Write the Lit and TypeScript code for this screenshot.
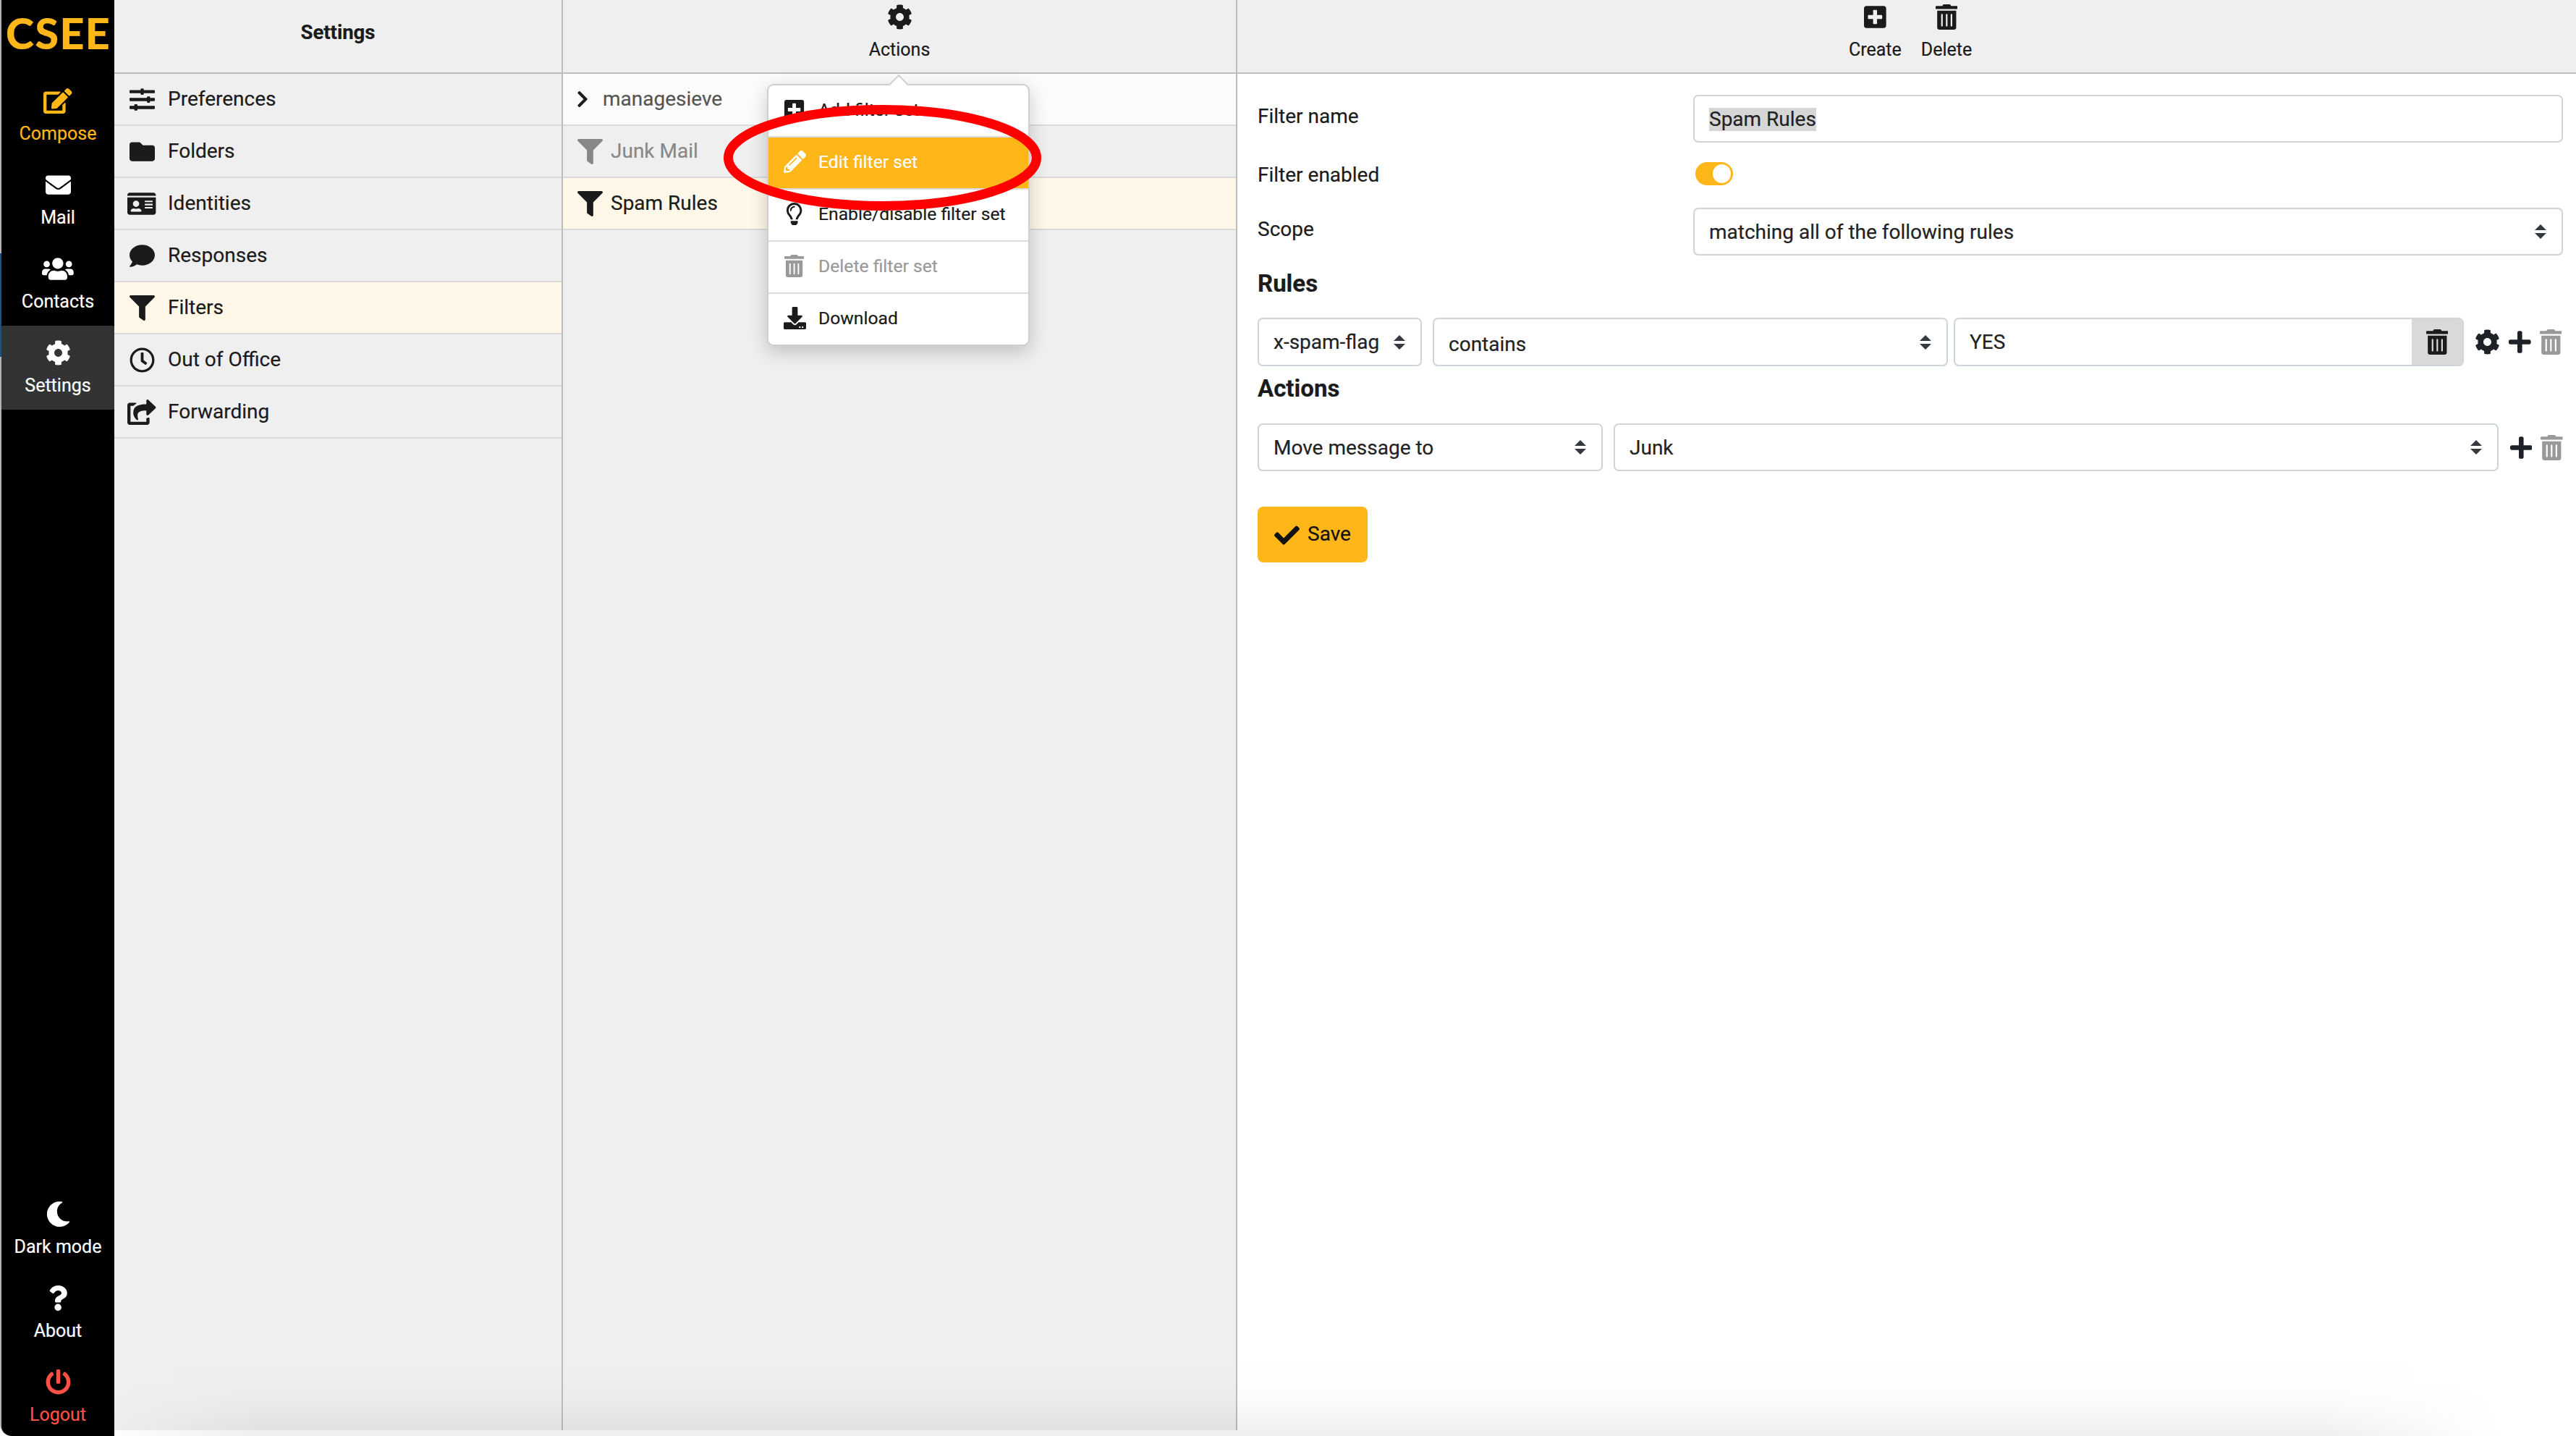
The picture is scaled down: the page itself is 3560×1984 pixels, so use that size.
import { LitElement, html, css } from "lit";
import { customElement } from "lit/decorators.js";

type Icon = [number, string];
const I: Record<string, Icon> = {
  cog: [512, "M487.4 315.7l-42.6-24.6c4.3-23.2 4.3-47 0-70.2l42.6-24.6c4.9-2.8 7.1-8.6 5.5-14-11.1-35.6-30-67.8-54.7-94.6-3.8-4.1-10-5.1-14.8-2.3L380.8 110c-17.9-15.4-38.5-27.3-60.8-35.1V25.8c0-5.6-3.9-10.5-9.4-11.7-36.7-8.2-74.3-7.8-109.2 0-5.5 1.2-9.4 6.1-9.4 11.7V75c-22.2 7.9-42.8 19.8-60.8 35.1L88.7 85.5c-4.9-2.8-11-1.9-14.8 2.3-24.7 26.7-43.6 58.9-54.7 94.6-1.7 5.4.6 11.2 5.5 14L67.3 221c-4.3 23.2-4.3 47 0 70.2l-42.6 24.6c-4.9 2.8-7.1 8.6-5.5 14 11.1 35.6 30 67.8 54.7 94.6 3.8 4.1 10 5.1 14.8 2.3l42.6-24.6c17.9 15.4 38.5 27.3 60.8 35.1v49.2c0 5.6 3.9 10.5 9.4 11.7 36.7 8.2 74.3 7.8 109.2 0 5.5-1.2 9.4-6.1 9.4-11.7v-49.2c22.2-7.9 42.8-19.8 60.8-35.1l42.6 24.6c4.9 2.8 11 1.9 14.8-2.3 24.7-26.7 43.6-58.9 54.7-94.6 1.5-5.5-.7-11.3-5.6-14.1zM256 336c-44.1 0-80-35.9-80-80s35.9-80 80-80 80 35.9 80 80-35.9 80-80 80z"],
  trash: [448, "M32 464a48 48 0 0 0 48 48h288a48 48 0 0 0 48-48V128H32zm272-256a16 16 0 0 1 32 0v224a16 16 0 0 1-32 0zm-96 0a16 16 0 0 1 32 0v224a16 16 0 0 1-32 0zm-96 0a16 16 0 0 1 32 0v224a16 16 0 0 1-32 0zM432 32H312l-9.4-18.7A24 24 0 0 0 281.1 0H166.8a23.72 23.72 0 0 0-21.4 13.3L136 32H16A16 16 0 0 0 0 48v32a16 16 0 0 0 16 16h416a16 16 0 0 0 16-16V48a16 16 0 0 0-16-16z"],
  plusSquare: [448, "M400 32H48C21.5 32 0 53.5 0 80v352c0 26.5 21.5 48 48 48h352c26.5 0 48-21.5 48-48V80c0-26.5-21.5-48-48-48zm-32 252c0 6.6-5.4 12-12 12h-92v92c0 6.6-5.4 12-12 12h-56c-6.6 0-12-5.4-12-12v-92H92c-6.6 0-12-5.4-12-12v-56c0-6.6 5.4-12 12-12h92v-92c0-6.6 5.4-12 12-12h56c6.6 0 12 5.4 12 12v92h92c6.6 0 12 5.4 12 12v56z"],
  plus: [448, "M416 208H272V64c0-17.67-14.33-32-32-32h-32c-17.67 0-32 14.33-32 32v144H32c-17.67 0-32 14.33-32 32v32c0 17.67 14.33 32 32 32h144v144c0 17.67 14.33 32 32 32h32c17.67 0 32-14.33 32-32V304h144c17.67 0 32-14.33 32-32v-32c0-17.67-14.33-32-32-32z"],
  filter: [512, "M487.976 0H24.028C2.71 0-8.047 25.866 7.058 40.971L192 225.941V432c0 7.831 3.821 15.17 10.237 19.662l80 55.98C298.02 518.69 320 507.493 320 487.98V225.941l184.947-184.97C520.021 25.896 509.338 0 487.976 0z"],
  chevron: [320, "M285.476 272.971L91.132 467.314c-9.373 9.373-24.569 9.373-33.941 0l-22.667-22.667c-9.357-9.357-9.375-24.522-.04-33.901L188.505 256 34.484 101.255c-9.335-9.379-9.317-24.544.04-33.901l22.667-22.667c9.373-9.373 24.569-9.373 33.941 0L285.475 239.03c9.373 9.372 9.373 24.568.001 33.941z"],
  pencil: [512, "M497.9 142.1l-46.1 46.1c-4.7 4.7-12.3 4.7-17 0l-111-111c-4.7-4.7-4.7-12.3 0-17l46.1-46.1c18.7-18.7 49.1-18.7 67.9 0l60.1 60.1c18.8 18.7 18.8 49.1 0 67.9zM284.2 99.8L21.6 362.4.4 483.9c-2.9 16.4 11.4 30.6 27.8 27.8l121.5-21.3 262.6-262.6c4.7-4.7 4.7-12.3 0-17l-111-111c-4.8-4.7-12.4-4.7-17.1 0zM124.1 339.9c-5.5-5.5-5.5-14.3 0-19.8l154-154c5.5-5.5 14.3-5.5 19.8 0s5.5 14.3 0 19.8l-154 154c-5.5 5.5-14.3 5.5-19.8 0zM88 424h48v36.3l-64.5 11.3-31.1-31.1L51.7 376H88v48z"],
  bulb: [352, "M176 80c-52.94 0-96 43.06-96 96 0 8.84 7.16 16 16 16s16-7.16 16-16c0-35.3 28.72-64 64-64 8.84 0 16-7.16 16-16s-7.16-16-16-16zM96.06 459.17c0 3.15.93 6.22 2.68 8.84l24.51 36.84c2.97 4.46 7.97 7.14 13.32 7.14h78.85c5.36 0 10.36-2.68 13.32-7.14l24.51-36.84c1.74-2.62 2.67-5.7 2.68-8.84l.05-43.18H96.02l.04 43.18zM176 0C73.72 0 0 82.97 0 176c0 44.37 16.45 84.85 43.56 115.78 16.64 18.99 42.74 58.8 52.42 92.16v.06h48v-.12c-.01-4.77-.72-9.51-2.15-14.07-5.59-17.81-22.82-64.77-62.17-109.67-20.54-23.43-31.52-53.15-31.61-84.14-.2-73.64 59.67-128 127.95-128 70.58 0 128 57.42 128 128 0 30.97-11.24 60.85-31.65 84.14-39.11 44.61-56.42 91.47-62.1 109.46a47.507 47.507 0 0 0-2.22 14.3v.1h48v-.05c9.68-33.37 35.78-73.18 52.42-92.16C335.55 260.85 352 220.37 352 176 352 78.8 273.2 0 176 0z"],
  download: [512, "M216 0h80c13.3 0 24 10.7 24 24v168h87.7c17.8 0 26.7 21.5 14.1 34.1L269.7 378.3c-7.5 7.5-19.8 7.5-27.3 0L90.1 226.1c-12.6-12.6-3.7-34.1 14.1-34.1H192V24c0-13.3 10.7-24 24-24zm296 376v112c0 13.3-10.7 24-24 24H24c-13.3 0-24-10.7-24-24V376c0-13.3 10.7-24 24-24h146.7l49 49c20.1 20.1 52.5 20.1 72.6 0l49-49H488c13.3 0 24 10.7 24 24zm-124 88c0-11-9-20-20-20s-20 9-20 20 9 20 20 20 20-9 20-20zm64 0c0-11-9-20-20-20s-20 9-20 20 9 20 20 20 20-9 20-20z"],
  check: [512, "M173.898 439.404l-166.4-166.4c-9.997-9.997-9.997-26.206 0-36.204l36.203-36.204c9.997-9.998 26.207-9.998 36.204 0L192 312.69 432.095 72.596c9.997-9.997 26.207-9.997 36.204 0l36.203 36.204c9.997 9.997 9.997 26.206 0 36.204l-294.4 294.401c-9.998 9.997-26.207 9.997-36.204-.001z"],
  edit: [576, "M402.6 83.2l90.2 90.2c3.8 3.8 3.8 10 0 13.8L274.4 405.6l-92.8 10.3c-12.4 1.4-22.9-9.1-21.5-21.5l10.3-92.8L388.8 83.2c3.8-3.8 10-3.8 13.8 0zm162-22.9l-48.8-48.8c-15.2-15.2-39.9-15.2-55.2 0l-35.4 35.4c-3.8 3.8-3.8 10 0 13.8l90.2 90.2c3.8 3.8 10 3.8 13.8 0l35.4-35.4c15.2-15.3 15.2-40 0-55.2zM384 346.2V448H64V128h229.8c3.2 0 6.2-1.3 8.5-3.5l40-40c7.6-7.6 2.2-20.5-8.5-20.5H48C21.5 64 0 85.5 0 112v352c0 26.5 21.5 48 48 48h352c26.5 0 48-21.5 48-48V306.2c0-10.7-12.9-16-20.5-8.5l-40 40c-2.2 2.3-3.5 5.3-3.5 8.5z"],
  envelope: [512, "M502.3 190.8c3.9-3.1 9.7-.2 9.7 4.7V400c0 26.5-21.5 48-48 48H48c-26.5 0-48-21.5-48-48V195.6c0-5 5.7-7.8 9.7-4.7 22.4 17.4 52.1 39.5 154.1 113.6 21.1 15.4 56.7 47.8 92.2 47.6 35.7.3 72-32.8 92.3-47.6 102-74.1 131.6-96.3 154-113.7zM256 320c23.2.4 56.6-29.2 73.4-41.4 132.7-96.3 142.8-104.7 173.4-128.7 5.8-4.5 9.2-11.5 9.2-18.9v-19c0-26.5-21.5-48-48-48H48C21.5 64 0 85.5 0 112v19c0 7.4 3.4 14.3 9.2 18.9 30.6 23.9 40.7 32.4 173.4 128.7 16.8 12.2 50.2 41.8 73.4 41.4z"],
  users: [640, "M96 224c35.3 0 64-28.7 64-64s-28.7-64-64-64-64 28.7-64 64 28.7 64 64 64zm448 0c35.3 0 64-28.7 64-64s-28.7-64-64-64-64 28.7-64 64 28.7 64 64 64zm32 32h-64c-17.6 0-33.5 7.1-45.1 18.6 40.3 22.1 68.9 62 75.1 109.4h66c17.7 0 32-14.3 32-32v-32c0-35.3-28.7-64-64-64zm-256 0c61.9 0 112-50.1 112-112S381.9 32 320 32 208 82.1 208 144s50.1 112 112 112zm76.8 32h-8.3c-20.8 10-43.9 16-68.5 16s-47.6-6-68.5-16h-8.3C179.6 288 128 339.6 128 403.2V432c0 26.5 21.5 48 48 48h288c26.5 0 48-21.5 48-48v-28.8c0-63.6-51.6-115.2-115.2-115.2zm-223.7-13.4C161.5 263.1 145.6 256 128 256H64c-35.3 0-64 28.7-64 64v32c0 17.7 14.3 32 32 32h65.9c6.3-47.4 34.9-87.3 75.2-109.4z"],
  sliders: [512, "M496 384H160v-16c0-8.8-7.2-16-16-16h-32c-8.8 0-16 7.2-16 16v16H16c-8.8 0-16 7.2-16 16v32c0 8.8 7.2 16 16 16h80v16c0 8.8 7.2 16 16 16h32c8.8 0 16-7.2 16-16v-16h336c8.8 0 16-7.2 16-16v-32c0-8.8-7.2-16-16-16zm0-160h-80v-16c0-8.8-7.2-16-16-16h-32c-8.8 0-16 7.2-16 16v16H16c-8.8 0-16 7.2-16 16v32c0 8.8 7.2 16 16 16h336v16c0 8.8 7.2 16 16 16h32c8.8 0 16-7.2 16-16v-16h80c8.8 0 16-7.2 16-16v-32c0-8.8-7.2-16-16-16zm0-160H288V48c0-8.8-7.2-16-16-16h-32c-8.8 0-16 7.2-16 16v16H16C7.2 64 0 71.2 0 80v32c0 8.8 7.2 16 16 16h208v16c0 8.8 7.2 16 16 16h32c8.8 0 16-7.2 16-16v-16h208c8.8 0 16-7.2 16-16V80c0-8.8-7.2-16-16-16z"],
  folder: [512, "M464 128H272l-64-64H48C21.49 64 0 85.49 0 112v288c0 26.51 21.49 48 48 48h416c26.51 0 48-21.49 48-48V176c0-26.51-21.49-48-48-48z"],
  idCard: [576, "M528 32H48C21.5 32 0 53.5 0 80v16h576V80c0-26.5-21.5-48-48-48zM0 432c0 26.5 21.5 48 48 48h480c26.5 0 48-21.5 48-48V128H0v304zm352-232c0-4.4 3.6-8 8-8h144c4.4 0 8 3.6 8 8v16c0 4.4-3.6 8-8 8H360c-4.4 0-8-3.6-8-8v-16zm0 64c0-4.4 3.6-8 8-8h144c4.4 0 8 3.6 8 8v16c0 4.4-3.6 8-8 8H360c-4.4 0-8-3.6-8-8v-16zm0 64c0-4.4 3.6-8 8-8h144c4.4 0 8 3.6 8 8v16c0 4.4-3.6 8-8 8H360c-4.4 0-8-3.6-8-8v-16zM176 192c35.3 0 64 28.7 64 64s-28.7 64-64 64-64-28.7-64-64 28.7-64 64-64zM67.1 396.2C75.5 370.5 99.6 352 128 352h8.2c12.3 5.1 25.7 8 39.8 8s27.6-2.9 39.8-8h8.2c28.4 0 52.5 18.5 60.9 44.2 3.2 9.9-5.2 19.8-15.6 19.8H82.7c-10.4 0-18.8-10-15.6-19.8z"],
  comment: [512, "M256 32C114.6 32 0 125.1 0 240c0 49.6 21.4 95 57 130.7C44.5 421.1 2.7 466 2.2 466.5c-2.2 2.3-2.8 5.7-1.5 8.7S4.8 480 8 480c66.3 0 116-31.8 140.6-51.4 32.7 12.3 69 19.4 107.4 19.4 141.4 0 256-93.1 256-208S397.4 32 256 32z"],
  clock: [512, "M256 8C119 8 8 119 8 256s111 248 248 248 248-111 248-248S393 8 256 8zm0 448c-110.5 0-200-89.5-200-200S145.5 56 256 56s200 89.5 200 200-89.5 200-200 200zm61.8-104.4l-84.9-61.7c-3.1-2.3-4.9-5.9-4.9-9.7V116c0-6.6 5.4-12 12-12h32c6.6 0 12 5.4 12 12v141.7l66.8 48.6c5.4 3.9 6.5 11.4 2.6 16.8L334.6 349c-3.9 5.3-11.4 6.5-16.8 2.6z"],
  share: [576, "M568.482 177.448L424.479 313.433C409.3 327.768 384 317.14 384 295.985v-71.963c-144.575.97-205.566 35.113-164.775 171.353 4.483 14.973-12.846 26.567-25.006 17.33C155.252 383.105 120 326.488 120 269.339c0-143.937 117.599-172.5 264-173.312V24.012c0-21.174 25.317-31.768 40.479-17.448l144.003 135.988c10.02 9.463 10.028 25.425 0 34.896zM384 379.128V448H64V128h50.916a11.99 11.99 0 0 0 8.648-3.693c14.953-15.568 32.237-27.89 51.014-37.676C186.708 80.313 182.394 64 168.61 64H48C21.49 64 0 85.49 0 112v352c0 26.51 21.49 48 48 48h352c26.51 0 48-21.49 48-48v-88.806c0-8.288-8.197-13.066-16.011-10.302-4.48 1.584-9.197 2.24-13.989 1.955-2.756-.163-5.473 1.08-7.184 2.281z"],
  moon: [512, "M283.211 512c78.962 0 151.079-35.925 198.857-94.792 7.068-8.708-.639-21.43-11.562-19.35-124.203 23.654-238.262-71.576-238.262-196.954 0-72.222 38.662-138.635 101.498-174.394 9.686-5.512 7.25-20.197-3.756-22.23A258.156 258.156 0 0 0 283.211 0c-141.309 0-256 114.511-256 256 0 141.309 114.511 256 256 256z"],
  question: [384, "M202.021 0C122.202 0 70.503 32.703 29.914 91.026c-7.363 10.58-5.093 25.086 5.178 32.874l43.138 32.709c10.373 7.865 25.132 6.026 33.253-4.148 25.049-31.381 43.63-49.449 82.757-49.449 30.764 0 68.816 19.799 68.816 49.631 0 22.552-18.617 34.134-48.993 51.164-35.423 19.86-82.299 44.576-82.299 106.405V320c0 13.255 10.745 24 24 24h72.471c13.255 0 24-10.745 24-24v-5.773c0-42.86 125.268-44.645 125.268-160.627C377.504 66.256 286.902 0 202.021 0zM192 373.459c-38.196 0-69.271 31.075-69.271 69.271 0 38.195 31.075 69.27 69.271 69.27s69.271-31.075 69.271-69.271-31.075-69.27-69.271-69.27z"],
  power: [512, "M400 54.1c63 45 104 118.6 104 201.9 0 136.8-110.8 247.7-247.5 248C120 504.3 8.2 393 8 256.4 7.9 173.1 48.9 99.3 111.8 54.2c11.7-8.3 28-4.8 35 7.7L162.6 90c5.9 10.5 3.1 23.8-6.6 31-41.5 30.8-68 79.6-68 134.9-.1 92.3 74.5 168.1 168 168.1 91.6 0 168.6-74.2 168-169.1-.3-51.8-24.7-101.8-68.1-134-9.7-7.2-12.4-20.5-6.5-30.9l15.8-28.1c7-12.4 23.2-16.1 34.8-7.8zM296 264V24c0-13.3-10.7-24-24-24h-32c-13.3 0-24 10.7-24 24v240c0 13.3 10.7 24 24 24h32c13.3 0 24-10.7 24-24z"],
};

const icon = (n: string, cls = "h35") => html`<svg class="ic ${cls}" viewBox="0 0 ${I[n][0]} 512" fill="currentColor"><path d=${I[n][1]}></path></svg>`;
const updown = () => html`<svg class="updown" viewBox="0 0 4 5" fill="#343a40"><path d="M2 0L0 2h4zM2 5L0 3h4z"></path></svg>`;

@customElement("app-root")
export class AppRoot extends LitElement {
  static styles = css`
    :host { display: block; position: relative; width: 3560px; height: 1984px; overflow: hidden; background: #fff;
      font-family: Roboto, "Liberation Sans", sans-serif; color: #1b1b1b; font-size: 28px; -webkit-text-stroke: .2px currentColor; }
    * { box-sizing: border-box; }
    .app { display: flex; width: 100%; height: 100%; }
    .ic { display: block; flex: none; width: auto; }
    .h35 { height: 35px; } .h31 { height: 31px; } .h26 { height: 26px; }

    .rail { flex: none; width: 158px; height: 1984px; padding-left: 2px; border-bottom-left-radius: 16px; overflow: hidden;
      background: linear-gradient(to bottom, #b4b4b4 350px, #1a5288 350px, #1a5288 493px, #b4b4b4 493px); }
    .side { height: 100%; background: #000; color: #fff; display: flex; flex-direction: column; border-bottom-left-radius: 14px; overflow: hidden; }
    .logo { height: 102px; flex: none; padding: 12px 0 0 6px; font-family: Lato, sans-serif; font-weight: 900; font-size: 59px; line-height: 68px; color: #ffb619; letter-spacing: 1.5px; }
    .nav { flex: none; height: 116px; padding-top: 20px; display: flex; flex-direction: column; align-items: center; font-size: 25px; }
    .nav span { display: block; margin-top: 16px; line-height: 24px; white-space: nowrap; }
    .nav.on { background: #333; }
    .nav.orange { color: #ffb619; }
    .nav.red { color: #ff5046; height: 112px; }
    .spring { flex: 1; }

    .main { flex: 1; min-width: 0; height: 1976px; display: flex; }
    .col { flex: none; height: 100%; display: flex; flex-direction: column; }
    .c1 { width: 620px; background: #efefef; border-right: 2px solid #bdbdbd; }
    .c2 { width: 932px; background: #efefef; border-right: 2px solid #bdbdbd; }
    .c3 { flex: 1; min-width: 0; background: #fff; }
    .head { flex: none; height: 102px; background: #efefef; border-bottom: 2px solid #bdbdbd; display: flex; align-items: flex-start; justify-content: center; }
    .title { font-size: 27.5px; font-weight: 700; line-height: 90px; }
    .tool { display: flex; flex-direction: column; align-items: center; padding-top: 6px; font-size: 25px; }
    .tool span { display: block; margin-top: 15px; line-height: 26px; white-space: nowrap; }
    .c3 .head { justify-content: flex-start; padding-left: 845px; gap: 27px; }

    .row { flex: none; height: 72px; border-bottom: 2px solid #dadada; display: flex; align-items: center; white-space: nowrap; }
    .row span { padding-bottom: 2px; }
    .c1 .row { padding-left: 18px; }
    .slot { flex: none; width: 40px; display: flex; justify-content: center; margin-right: 16px; }
    .cream { background: #fff8e9; }
    .c2 .row { padding-left: 20px; }
    .white { background: #fbfbfb; }
    .grey { color: #888; }
    .chev { flex: none; width: 25px; margin-right: 11px; margin-left: -1px; padding-right: 1px; color: #1b1b1b; }
    .fslot { flex: none; margin-right: 11px; }
    .ms { color: #555; }

    .form { padding: 29px 18px 0 28px; display: flex; flex-direction: column; }
    .field { display: flex; align-items: center; height: 66px; }
    .field .lab { flex: none; width: 602px; padding-bottom: 7px; }
    .tall { height: 90px; }
    .tall .lab { padding-bottom: 1px; }
    .ctl { flex: 1; min-width: 0; height: 66px; border: 2px solid #ced4da; border-radius: 7px; background: #fff; display: flex; align-items: center; padding: 0 21px 0 20px; white-space: nowrap; color: #222; }
    .ctl.none { flex: none; }
    .ctl .txt { flex: 1; min-width: 0; }
    .updown { display: block; flex: none; width: 16px; height: 20px; }
    .sel { background: #d6d6d6; line-height: 32px; display: inline-block; margin-top: 1px; }
    .toggle { width: 52px; height: 32px; margin-left: 3px; margin-bottom: 5px; background: #ffb619; border-radius: 16px; display: flex; justify-content: flex-end; align-items: center; padding-right: 3px; }
    .knob { width: 25px; height: 26px; border-radius: 50%; background: #fff; }
    h2 { margin: 0; font-size: 33px; font-weight: 700; line-height: 40px; display: flex; align-items: center; }
    .h-rules { height: 86px; padding-bottom: 8px; }
    .h-actions { height: 79px; padding-bottom: 17px; }
    .line { display: flex; align-items: center; }
    .rule { height: 67px; }
    .rule .ctl { height: 67px; }
    .act { height: 66px; }
    .w227 { width: 227px; } .w711 { width: 712px; margin-left: 15px; } .w477 { width: 477px; } .wfill { margin-left: 15px; }
    .low .txt { padding-top: 6px; }
    .group { flex: none; width: 705px; height: 67px; margin-left: 8px; border: 2px solid #ced4da; border-radius: 7px; display: flex; overflow: hidden; }
    .group .in { flex: 1; display: flex; align-items: center; padding: 0 20px; color: #222; }
    .group .btn { flex: none; width: 70px; background: #d9d9d9; display: flex; align-items: center; justify-content: center; }
    .tools { flex: none; display: flex; align-items: center; color: #1e2127; }
    .m15 { margin-left: 15px; } .m16 { margin-left: 16px; } .m12 { margin-left: 12px; }
    .off { color: #999; }
    .save { margin-top: 49px; width: 152px; height: 77px; background: #ffb619; border-radius: 8px; display: flex; align-items: center; padding: 0 0 2px 23px; gap: 11px; color: #111; }
    .save svg { margin-top: 4px; }

    .menu { position: absolute; left: 1060px; top: 116px; width: 363px; background: #fff; border: 2px solid #cfcfcf; border-radius: 9px; box-shadow: 0 8px 26px rgba(0,0,0,.2); font-size: 24.7px; }
    .arrow { position: absolute; left: 170px; top: -11px; width: 20px; height: 20px; transform: rotate(45deg); background: #fff; border-top: 2px solid #cfcfcf; border-left: 2px solid #cfcfcf; }
    .item { position: relative; height: 72px; padding: 0 0 3px 20px; display: flex; align-items: center; white-space: nowrap; border-bottom: 2px solid #dadada; color: #1b1b1b; }
    .item:last-child { height: 70px; border-bottom: none; }
    .islot { flex: none; width: 32px; margin-right: 17px; display: flex; justify-content: center; }
    .item.hot { background: #ffb619; color: #fff; }
    .item.dis { color: #999; }

    .ring { position: absolute; left: 1000px; top: 145px; width: 439px; height: 146px; pointer-events: none; }
    .fade { position: absolute; left: 158px; right: 0; bottom: 0; height: 110px; pointer-events: none;
      background: linear-gradient(to top, rgba(0,0,0,.068), rgba(0,0,0,.055) 8px, rgba(0,0,0,.03) 30px, rgba(0,0,0,.008) 60px, transparent);
      -webkit-mask-image: linear-gradient(to right, rgba(0,0,0,.15), #000 200px, #000 3050px, transparent 3300px);
      mask-image: linear-gradient(to right, rgba(0,0,0,.15), #000 200px, #000 3050px, transparent 3300px); }
  `;

  render() {
    const settings: [string, string, boolean?][] = [
      ["sliders", "Preferences"], ["folder", "Folders"], ["idCard", "Identities"], ["comment", "Responses"],
      ["filter", "Filters", true], ["clock", "Out of Office"], ["share", "Forwarding"],
    ];
    return html`
      <div class="app">
        <div class="rail"><nav class="side">
          <div class="logo">CSEE</div>
          <div class="nav orange">${icon("edit")}<span>Compose</span></div>
          <div class="nav">${icon("envelope")}<span>Mail</span></div>
          <div class="nav">${icon("users")}<span>Contacts</span></div>
          <div class="nav on">${icon("cog")}<span>Settings</span></div>
          <div class="spring"></div>
          <div class="nav">${icon("moon")}<span>Dark mode</span></div>
          <div class="nav">${icon("question")}<span>About</span></div>
          <div class="nav red">${icon("power")}<span>Logout</span></div>
        </nav></div>
        <div class="main">
          <section class="col c1">
            <header class="head"><div class="title">Settings</div></header>
            ${settings.map(([ic, t, on]) => html`<div class="row ${on ? "cream" : ""}"><div class="slot">${icon(ic)}</div><span>${t}</span></div>`)}
          </section>
          <section class="col c2">
            <header class="head"><div class="tool">${icon("cog")}<span>Actions</span></div></header>
            <div class="row white ms"><div class="chev">${icon("chevron", "h26")}</div><span>managesieve</span></div>
            <div class="row grey"><div class="fslot">${icon("filter")}</div><span>Junk Mail</span></div>
            <div class="row cream"><div class="fslot">${icon("filter")}</div><span>Spam Rules</span></div>
          </section>
          <section class="col c3">
            <header class="head">
              <div class="tool">${icon("plusSquare")}<span>Create</span></div>
              <div class="tool">${icon("trash")}<span>Delete</span></div>
            </header>
            <div class="form">
              <div class="field"><div class="lab">Filter name</div><div class="ctl"><span class="sel">Spam Rules</span></div></div>
              <div class="field tall"><div class="lab">Filter enabled</div><div class="toggle"><div class="knob"></div></div></div>
              <div class="field"><div class="lab">Scope</div><div class="ctl"><span class="txt">matching all of the following rules</span>${updown()}</div></div>
              <h2 class="h-rules">Rules</h2>
              <div class="line rule">
                <div class="ctl none w227"><span class="txt">x-spam-flag</span>${updown()}</div>
                <div class="ctl none w711 low"><span class="txt">contains</span>${updown()}</div>
                <div class="group"><div class="in">YES</div><div class="btn">${icon("trash")}</div></div>
                <div class="tools m15">${icon("cog")}</div>
                <div class="tools m12">${icon("plus")}</div>
                <div class="tools m12 off">${icon("trash")}</div>
              </div>
              <h2 class="h-actions">Actions</h2>
              <div class="line act">
                <div class="ctl none w477"><span class="txt">Move message to</span>${updown()}</div>
                <div class="ctl wfill"><span class="txt">Junk</span>${updown()}</div>
                <div class="tools m16">${icon("plus")}</div>
                <div class="tools m12 off">${icon("trash")}</div>
              </div>
              <div class="save">${icon("check")}<span>Save</span></div>
            </div>
          </section>
        </div>
      </div>
      <div class="fade"></div>
      <div class="menu">
        <div class="arrow"></div>
        <div class="item"><div class="islot">${icon("plusSquare", "h31")}</div>Add filter set</div>
        <div class="item hot"><div class="islot">${icon("pencil", "h31")}</div>Edit filter set</div>
        <div class="item"><div class="islot">${icon("bulb", "h31")}</div>Enable/disable filter set</div>
        <div class="item dis"><div class="islot">${icon("trash", "h31")}</div>Delete filter set</div>
        <div class="item"><div class="islot">${icon("download", "h31")}</div>Download</div>
      </div>
      <svg class="ring" viewBox="0 0 439 146"><ellipse cx="219.5" cy="73" rx="213" ry="66.5" fill="none" stroke="#f00" stroke-width="13"></ellipse></svg>
    `;
  }
}
